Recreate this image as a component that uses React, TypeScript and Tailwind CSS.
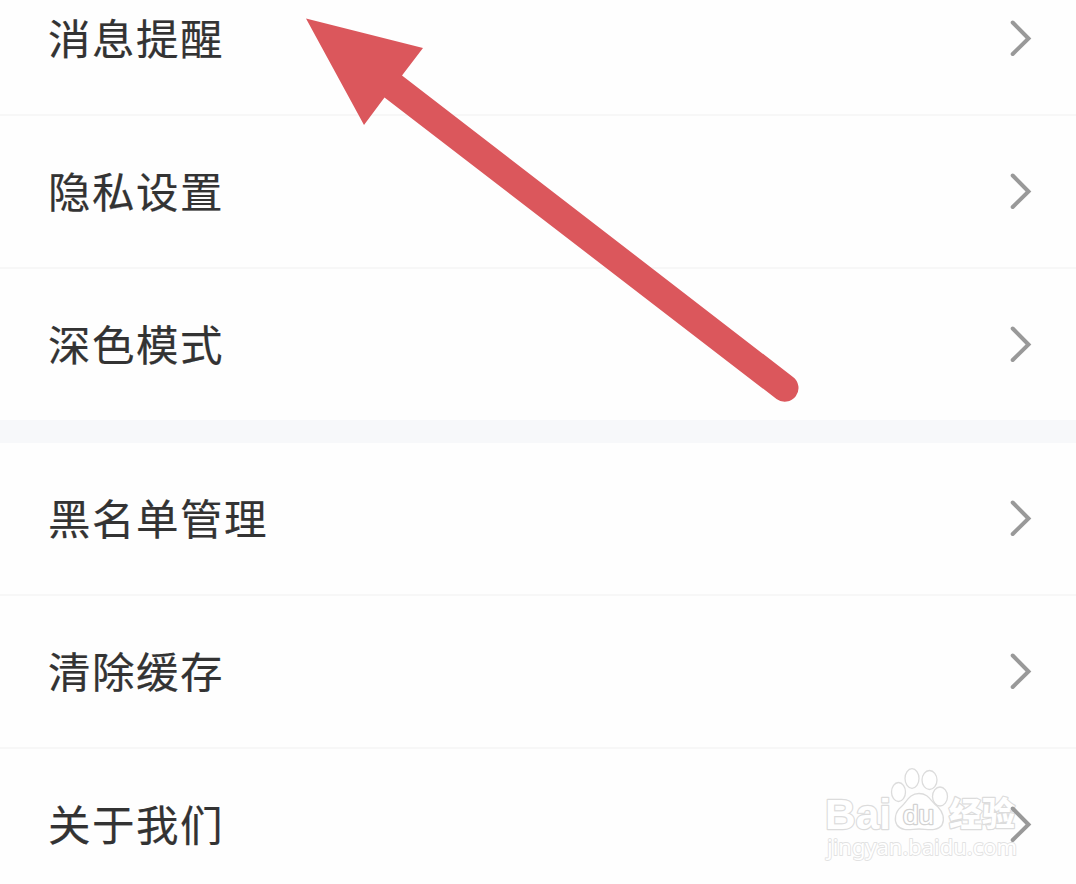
const groups = [
  ["消息提醒", "隐私设置", "深色模式"],
  ["黑名单管理", "清除缓存", "关于我们"],
];

function Chevron() {
  return (
    <svg className="relative z-10 w-6 h-10" viewBox="0 0 24 40" fill="none" stroke="#999999" strokeWidth="4" strokeLinecap="round">
      <path d="M4.700 3.500 L20.500 19.500 L4.700 35" />
    </svg>
  );
}

function Arrow() {
  return (
    <svg className="absolute left-[300px] top-[10px] w-[510px] h-[400px]" viewBox="300 10 510 400" fill="#db575c">
      <path d="M306 18.500 L423 48 L402 75.500 L793 377 A13.700 13.700 0 0 1 776.500 399 L384.500 97.500 L364 125 Z" />
    </svg>
  );
}

function Watermark() {
  return (
    <svg
      className="absolute left-[815px] top-[760px] w-[215px] h-[110px]"
      viewBox="815 760 215 110"
      fill="#ffffff"
      stroke="#dcdcdc"
      strokeWidth="1.300"
      strokeLinejoin="round"
    >
      <g paintOrder="stroke">
        <text x="825" y="828.500" fontSize="43" fontWeight="700" strokeWidth="2.400" textLength="66" lengthAdjust="spacingAndGlyphs" fontFamily="'Liberation Sans', sans-serif">Bai</text>
        <text x="949" y="826" fontSize="33" fontWeight="900" strokeWidth="2.400" textLength="66" lengthAdjust="spacingAndGlyphs" fontFamily="'Noto Sans CJK SC', sans-serif">经验</text>
        <text x="827" y="854.500" fontSize="22.500" strokeWidth="1.800" stroke="#e2e2e2" textLength="190" lengthAdjust="spacingAndGlyphs" fontFamily="'Noto Sans', sans-serif">jingyan.baidu.com</text>
      </g>
      <ellipse cx="898.500" cy="792" rx="7" ry="9.500" />
      <ellipse cx="912" cy="778.500" rx="7" ry="9.800" />
      <ellipse cx="929.500" cy="780" rx="7.500" ry="9.500" />
      <ellipse cx="940" cy="796.500" rx="7.500" ry="9.500" />
      <path d="M919 793.500 C909 793.500 907 802 901 807 C895 812 894 820 897 825 C902 832 911 829 919 829 C927 829 937 832 942 825 C945 819 943 812 938 807 C931 802 929 793.500 919 793.500 Z" />
      <text x="903" y="823.500" fontSize="25" fontFamily="'Liberation Sans', sans-serif" strokeWidth="2.400" stroke="#d2d2d2" paintOrder="stroke" textLength="31" lengthAdjust="spacingAndGlyphs">du</text>
    </svg>
  );
}

export default function App() {
  return (
    <div className="relative w-[1076px] h-[884px] overflow-hidden bg-[#fefefe]">
      {/* the list is scrolled, its first row is cut off at the top */}
      <div className="-mt-[37px] flex flex-col gap-[23px] bg-[#f7f8fa]">
        {groups.map((items) => (
          <div key={items[0]} className="divide-y-2 divide-[#f7f7f7] bg-[#fefefe]">
            {items.map((label) => (
              <div key={label} className="box-content h-[151px] flex items-center justify-between">
                <span className="pl-12 pb-[2px] text-[42.500px] leading-none tracking-[1.500px] text-[#333333] [-webkit-text-stroke:0.200px_#333333] font-['Noto_Sans_CJK_SC',sans-serif]">
                  {label}
                </span>
                <div className="pr-[44px]">
                  <Chevron />
                </div>
              </div>
            ))}
          </div>
        ))}
      </div>
      <Watermark />
      <Arrow />
    </div>
  );
}
